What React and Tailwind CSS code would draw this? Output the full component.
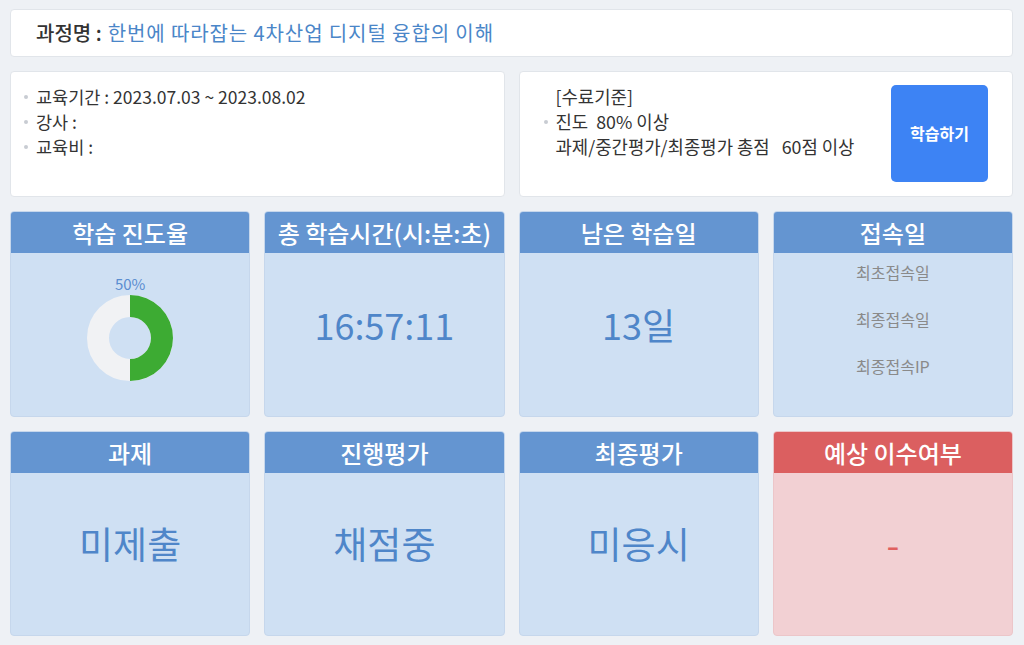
import React from "react";

const font = { fontFamily: '"Noto Sans CJK KR", "Noto Sans", sans-serif' };

function Bullet() {
  return <span className="inline-block w-[4px] h-[4px] rounded-full bg-[#c8ccd2] mr-[8px] align-middle relative -top-[2px]" />;
}

function StatCard({ title, red, children, bodyClass = "" }) {
  return (
    <div className={`flex flex-col rounded-[4px] overflow-hidden border ${red ? "border-[#ecc6c9] bg-[#f2d0d3]" : "border-[#c6d7ec] bg-[#cfe0f3]"}`}>
      <div className={`h-[41px] shrink-0 flex items-center justify-center text-white text-[24px] leading-[30px] font-medium ${red ? "bg-[#db5f60]" : "bg-[#6495d1]"}`}>
        {title}
      </div>
      <div className={`flex-1 ${bodyClass}`}>{children}</div>
    </div>
  );
}

function Donut() {
  return (
    <svg width="86" height="86" viewBox="0 0 86 86">
      <circle cx="43" cy="43" r="32" fill="none" stroke="#f1f2f4" strokeWidth="22" />
      <path d="M43 0 A43 43 0 0 1 43 86 L43 64 A21 21 0 0 0 43 22 Z" fill="#3dab33" />
    </svg>
  );
}

export default function App() {
  return (
    <div style={font} className="w-full h-[645px] bg-[#eef1f5] pl-[10px] pr-[11px] pt-[9px] flex flex-col gap-[14px] overflow-hidden">
      <div className="h-[48px] shrink-0 bg-white rounded-[4px] border border-[#e1e5ea] flex items-center pl-[25px] text-[20px]">
        <span className="text-[#333] font-medium">과정명 :</span>
        <span className="text-[#4a86c8] ml-[6px] tracking-[0.9px]">한번에 따라잡는 4차산업 디지털 융합의 이해</span>
      </div>

      <div className="h-[126px] shrink-0 grid grid-cols-2 gap-[14px]">
        <div className="bg-white rounded-[4px] border border-[#e1e5ea] pl-[13px] pt-[12px] text-[17.5px] leading-[25px] text-[#333]">
          <div><Bullet />교육기간 : 2023.07.03 ~ 2023.08.02</div>
          <div><Bullet />강사 :</div>
          <div><Bullet />교육비 :</div>
        </div>
        <div className="bg-white rounded-[4px] border border-[#e1e5ea] flex items-start justify-between pl-[24px] pr-[24px] pt-[12px] text-[17.8px] leading-[25px] text-[#333]">
          <div>
            <div className="pl-[12px]">[수료기준]</div>
            <div><Bullet />진도&nbsp; 80% 이상</div>
            <div className="pl-[12px]">과제/중간평가/최종평가 총점 &nbsp; 60점 이상</div>
          </div>
          <button className="mt-[1px] w-[97px] h-[97px] rounded-[5px] bg-[#3d83f4] text-white text-[16px] font-bold">
            학습하기
          </button>
        </div>
      </div>

      <div className="h-[206px] shrink-0 grid grid-cols-4 gap-[14px]">
        <StatCard title="학습 진도율" bodyClass="flex flex-col items-center pt-[22px]">
          <div className="text-[15px] leading-[18px] text-[#5a8dd0]">50%</div>
          <div className="mt-[2px]"><Donut /></div>
        </StatCard>
        <StatCard title="총 학습시간(시:분:초)" bodyClass="flex items-center justify-center pb-[22px]">
          <div className="text-[36px] leading-[44px] text-[#4f86c9]">16:57:11</div>
        </StatCard>
        <StatCard title="남은 학습일" bodyClass="flex items-center justify-center pb-[22px]">
          <div className="text-[36px] leading-[44px] text-[#4f86c9]">13일</div>
        </StatCard>
        <StatCard title="접속일" bodyClass="flex flex-col items-center pt-[9px] gap-[27px] text-[16px] leading-[20px] text-[#8a8a8a]">
          <div>최초접속일</div>
          <div>최종접속일</div>
          <div>최종접속IP</div>
        </StatCard>
      </div>

      <div className="h-[205px] shrink-0 grid grid-cols-4 gap-[14px]">
        <StatCard title="과제" bodyClass="flex items-center justify-center pb-[22px]">
          <div className="text-[37px] leading-[44px] text-[#4f86c9]">미제출</div>
        </StatCard>
        <StatCard title="진행평가" bodyClass="flex items-center justify-center pb-[22px]">
          <div className="text-[37px] leading-[44px] text-[#4f86c9]">채점중</div>
        </StatCard>
        <StatCard title="최종평가" bodyClass="flex items-center justify-center pb-[22px]">
          <div className="text-[37px] leading-[44px] text-[#4f86c9]">미응시</div>
        </StatCard>
        <StatCard title="예상 이수여부" red bodyClass="flex items-center justify-center pb-[22px]">
          <div className="text-[37px] leading-[44px] text-[#e0605f]">-</div>
        </StatCard>
      </div>
    </div>
  );
}
